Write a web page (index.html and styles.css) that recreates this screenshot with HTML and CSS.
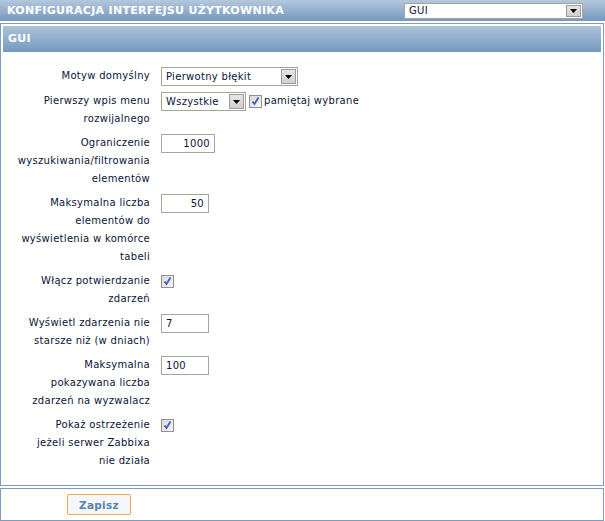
FILE: index.html
```html
<!DOCTYPE html>
<html lang="pl">
<head>
  <meta charset="UTF-8">
  <title>Konfiguracja interfejsu użytkownika</title>
  <link rel="stylesheet" href="styles.css">
</head>
<body>
  <div class="topbar">
    <span class="topbar-title">KONFIGURACJA INTERFEJSU UŻYTKOWNIKA</span>
    <span class="combo combo-top">
      <span class="combo-value">GUI</span>
      <span class="combo-btn"><svg width="7" height="4" viewBox="0 0 7 4"><path d="M0 0h7L3.5 4z" fill="#000"/></svg></span>
    </span>
  </div>

  <div class="panel">
    <div class="panel-head">GUI</div>
    <div class="form">
      <div class="row">
        <div class="label">Motyw domyślny</div>
        <div class="field">
          <span class="combo combo-theme">
            <span class="combo-value">Pierwotny błękit</span>
            <span class="combo-btn"><svg width="7" height="4" viewBox="0 0 7 4"><path d="M0 0h7L3.5 4z" fill="#000"/></svg></span>
          </span>
        </div>
      </div>
      <div class="row">
        <div class="label">Pierwszy wpis menu<br>rozwijalnego</div>
        <div class="field">
          <span class="combo combo-menu">
            <span class="combo-value">Wszystkie</span>
            <span class="combo-btn"><svg width="7" height="4" viewBox="0 0 7 4"><path d="M0 0h7L3.5 4z" fill="#000"/></svg></span>
          </span>
          <span class="check"><svg width="11" height="11" viewBox="0 0 11 11"><path d="M2.5 5.5l2 2.5L8.5 1.5" fill="none" stroke="#3d5fc4" stroke-width="1.8"/></svg></span>
          <span class="check-text">pamiętaj wybrane</span>
        </div>
      </div>
      <div class="row">
        <div class="label">Ograniczenie<br>wyszukiwania/filtrowania<br>elementów</div>
        <div class="field"><input class="text-input num wide" type="text" value="1000"></div>
      </div>
      <div class="row">
        <div class="label">Maksymalna liczba<br>elementów do<br>wyświetlenia w komórce<br>tabeli</div>
        <div class="field"><input class="text-input num" type="text" value="50"></div>
      </div>
      <div class="row">
        <div class="label">Włącz potwierdzanie<br>zdarzeń</div>
        <div class="field">
          <span class="check"><svg width="11" height="11" viewBox="0 0 11 11"><path d="M2.5 5.5l2 2.5L8.5 1.5" fill="none" stroke="#3d5fc4" stroke-width="1.8"/></svg></span>
        </div>
      </div>
      <div class="row">
        <div class="label">Wyświetl zdarzenia nie<br>starsze niż (w dniach)</div>
        <div class="field"><input class="text-input" type="text" value="7"></div>
      </div>
      <div class="row">
        <div class="label">Maksymalna<br>pokazywana liczba<br>zdarzeń na wyzwalacz</div>
        <div class="field"><input class="text-input" type="text" value="100"></div>
      </div>
      <div class="row">
        <div class="label">Pokaż ostrzeżenie<br>jeżeli serwer Zabbixa<br>nie działa</div>
        <div class="field">
          <span class="check"><svg width="11" height="11" viewBox="0 0 11 11"><path d="M2.5 5.5l2 2.5L8.5 1.5" fill="none" stroke="#3d5fc4" stroke-width="1.8"/></svg></span>
        </div>
      </div>
    </div>
  </div>

  <div class="footer">
    <button class="btn" type="button">Zapisz</button>
  </div>
</body>
</html>
```

FILE: styles.css
```css
body {
  margin: 0;
  background: #fff;
  color: #0a1438;
  font-family: "DejaVu Sans", Verdana, sans-serif;
  font-size: 10px;
  letter-spacing: 0.3px;
}
.topbar {
  display: flex;
  align-items: center;
  justify-content: space-between;
  height: 21px;
  padding: 0 22px 0 7px;
  background: linear-gradient(#b4c8dd, #7398bf);
}
.topbar-title {
  color: #fff;
  font-weight: bold;
  font-size: 11px;
  letter-spacing: 0.3px;
}
.combo {
  position: relative;
  display: inline-block;
  box-sizing: border-box;
  height: 19px;
  line-height: 17px;
  border: 1px solid #a8a498;
  background: #fff;
  padding-left: 4px;
}
.combo-top {
  width: 179px;
  height: 16px;
  line-height: 14px;
}
.combo-theme {
  width: 137px;
}
.combo-menu {
  width: 85px;
}
.combo-btn {
  position: absolute;
  top: 1px;
  right: 1px;
  bottom: 1px;
  width: 15px;
  box-sizing: border-box;
  border: 1px solid #9c9c9c;
  background: linear-gradient(#e6e6e6, #cfcfcf);
  display: flex;
  align-items: flex-end;
  justify-content: center;
  padding-bottom: 4px;
}
.combo-top .combo-btn {
  padding-bottom: 3px;
}
.panel {
  margin: 2px 1px 0 0;
  border: 1px solid #7e9cbd;
  padding: 2px;
}
.panel-head {
  height: 26px;
  line-height: 26px;
  padding-left: 5px;
  background: linear-gradient(#adc3d9, #7499bf);
  color: #fff;
  font-weight: bold;
  font-size: 11px;
}
.form {
  padding: 12px 0 10px;
}
.row {
  display: grid;
  grid-template-columns: 147px 1fr;
  column-gap: 11px;
  padding: 3px 0;
  line-height: 18px;
}
.label {
  text-align: right;
}
.field {
  display: flex;
  align-items: flex-start;
  gap: 3px;
}
.text-input {
  box-sizing: border-box;
  width: 48px;
  height: 19px;
  margin: 0;
  padding: 0 4px;
  border: 1px solid #a8a498;
  font-family: inherit;
  font-size: 10px;
  letter-spacing: 0.3px;
  color: #0a1438;
}
.text-input.num {
  text-align: right;
}
.text-input.wide {
  width: 54px;
}
.check {
  display: inline-flex;
  align-items: center;
  justify-content: center;
  box-sizing: border-box;
  width: 13px;
  height: 13px;
  margin-top: 3px;
  border: 1px solid #8e9093;
  background: linear-gradient(135deg, #d8d8d8, #f7f7f7);
}
.check-text {
  margin-left: -1px;
}
.footer {
  margin: 2px 1px 0 0;
  border: 1px solid #7e9cbd;
  padding: 5px 0 5px 66px;
}
.btn {
  display: block;
  width: 64px;
  height: 21px;
  border: 1px solid #f5a845;
  border-radius: 2px;
  background: #f4f6f9;
  color: #5a82b0;
  font-family: inherit;
  font-size: 10.5px;
  font-weight: bold;
  letter-spacing: 0.3px;
}
```
